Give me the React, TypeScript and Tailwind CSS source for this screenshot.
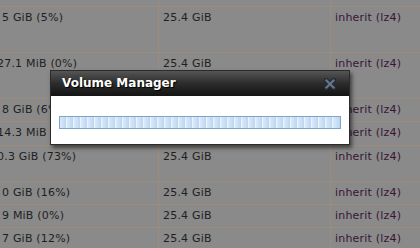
import React from 'react';

const rows = [
  { h: 'h-[46px]', c1: '5 GiB (5%)', s1: 'ml-[2px]', c2: '25.4 GiB', c3: 'inherit (lz4)' },
  { h: 'h-[46px]', c1: '27.1 MiB (0%)', s1: '-ml-[3px]', c2: '25.4 GiB', c3: 'inherit (lz4)' },
  { h: 'h-[23px]', c1: '8 GiB (6%)', s1: 'ml-[2px]', c2: '25.4 GiB', c3: 'inherit (lz4)' },
  { h: 'h-[24px]', c1: '14.3 MiB (0%)', s1: '-ml-[3px]', c2: '25.4 GiB', c3: 'inherit (lz4)' },
  { h: 'h-[36px]', c1: '0.3 GiB (73%)', s1: '-ml-[3px]', c2: '25.4 GiB', c3: 'inherit (lz4)' },
  { h: 'h-[23px]', c1: '0 GiB (16%)', s1: 'ml-[2px]', c2: '25.4 GiB', c3: 'inherit (lz4)' },
  { h: 'h-[23px]', c1: '9 MiB (0%)', s1: 'ml-[2px]', c2: '25.4 GiB', c3: 'inherit (lz4)' },
  { h: 'h-[23px]', c1: '7 GiB (12%)', s1: 'ml-[2px]', c2: '25.4 GiB', c3: 'inherit (lz4)' },
];

function CloseIcon() {
  return (
    <svg width="12" height="12" viewBox="0 0 12 12">
      <path d="M2 2 L10 10 M10 2 L2 10" stroke="#262d34" strokeWidth="4.5" strokeLinecap="square" />
      <path d="M2.5 2.5 L9.5 9.5 M9.5 2.5 L2.5 9.5" stroke="#66768a" strokeWidth="2.2" strokeLinecap="square" />
    </svg>
  );
}

export default function App() {
  return (
    <div className="relative w-[420px] h-[248px] overflow-hidden bg-[#8a8a8a] font-['DejaVu_Sans',sans-serif] text-[11px] leading-[13px] tracking-[0.2px] text-[#1f1f1f]">
      {/* table */}
      <div className="grid grid-cols-[158px_172px_1fr] h-[6px]">
        <div />
        <div className="border-l border-[#9c8c7e]" />
        <div className="border-l border-[#9c8c7e]" />
      </div>
      {rows.map((r, i) => (
        <div key={i} className={`grid grid-cols-[158px_172px_1fr] border-t border-[#9c8c7e] ${r.h}`}>
          <div className="overflow-hidden pt-[4px] whitespace-nowrap">
            <div className={r.s1}>{r.c1}</div>
          </div>
          <div className="border-l border-[#9c8c7e] pt-[4px] pl-[4px] whitespace-nowrap">{r.c2}</div>
          <div className="border-l border-[#9c8c7e] pt-[4px] pl-[4px] whitespace-nowrap text-[#361634]">{r.c3}</div>
        </div>
      ))}

      {/* Volume Manager dialog */}
      <div className="absolute left-[50px] top-[70px] w-[300px] border border-[#2b2b2b] bg-white shadow-[2px_3px_4px_rgba(0,0,0,0.55)] tracking-normal">
        <div className="flex items-center justify-between h-[25px] pl-[11px] pr-[13px] bg-[linear-gradient(#555555,#2c2c2c_50%,#141414)]">
          <span className="font-bold text-[12px] text-white [text-shadow:1px_1px_1px_#000]">Volume Manager</span>
          <CloseIcon />
        </div>
        <div className="h-[48px] pt-[20px] pl-[8px]">
          <div className="flex w-[282px] h-[13px] border border-[#7ea4c8] bg-[#c4dcf3]">
            {Array.from({ length: 40 }).map((_, i) => (
              <div key={i} className="w-[7px] shrink-0 border-r border-[#eaf3fc] bg-[linear-gradient(90deg,#d9eafa,#bcd6f0)] last:border-r-0" />
            ))}
          </div>
        </div>
      </div>
    </div>
  );
}
